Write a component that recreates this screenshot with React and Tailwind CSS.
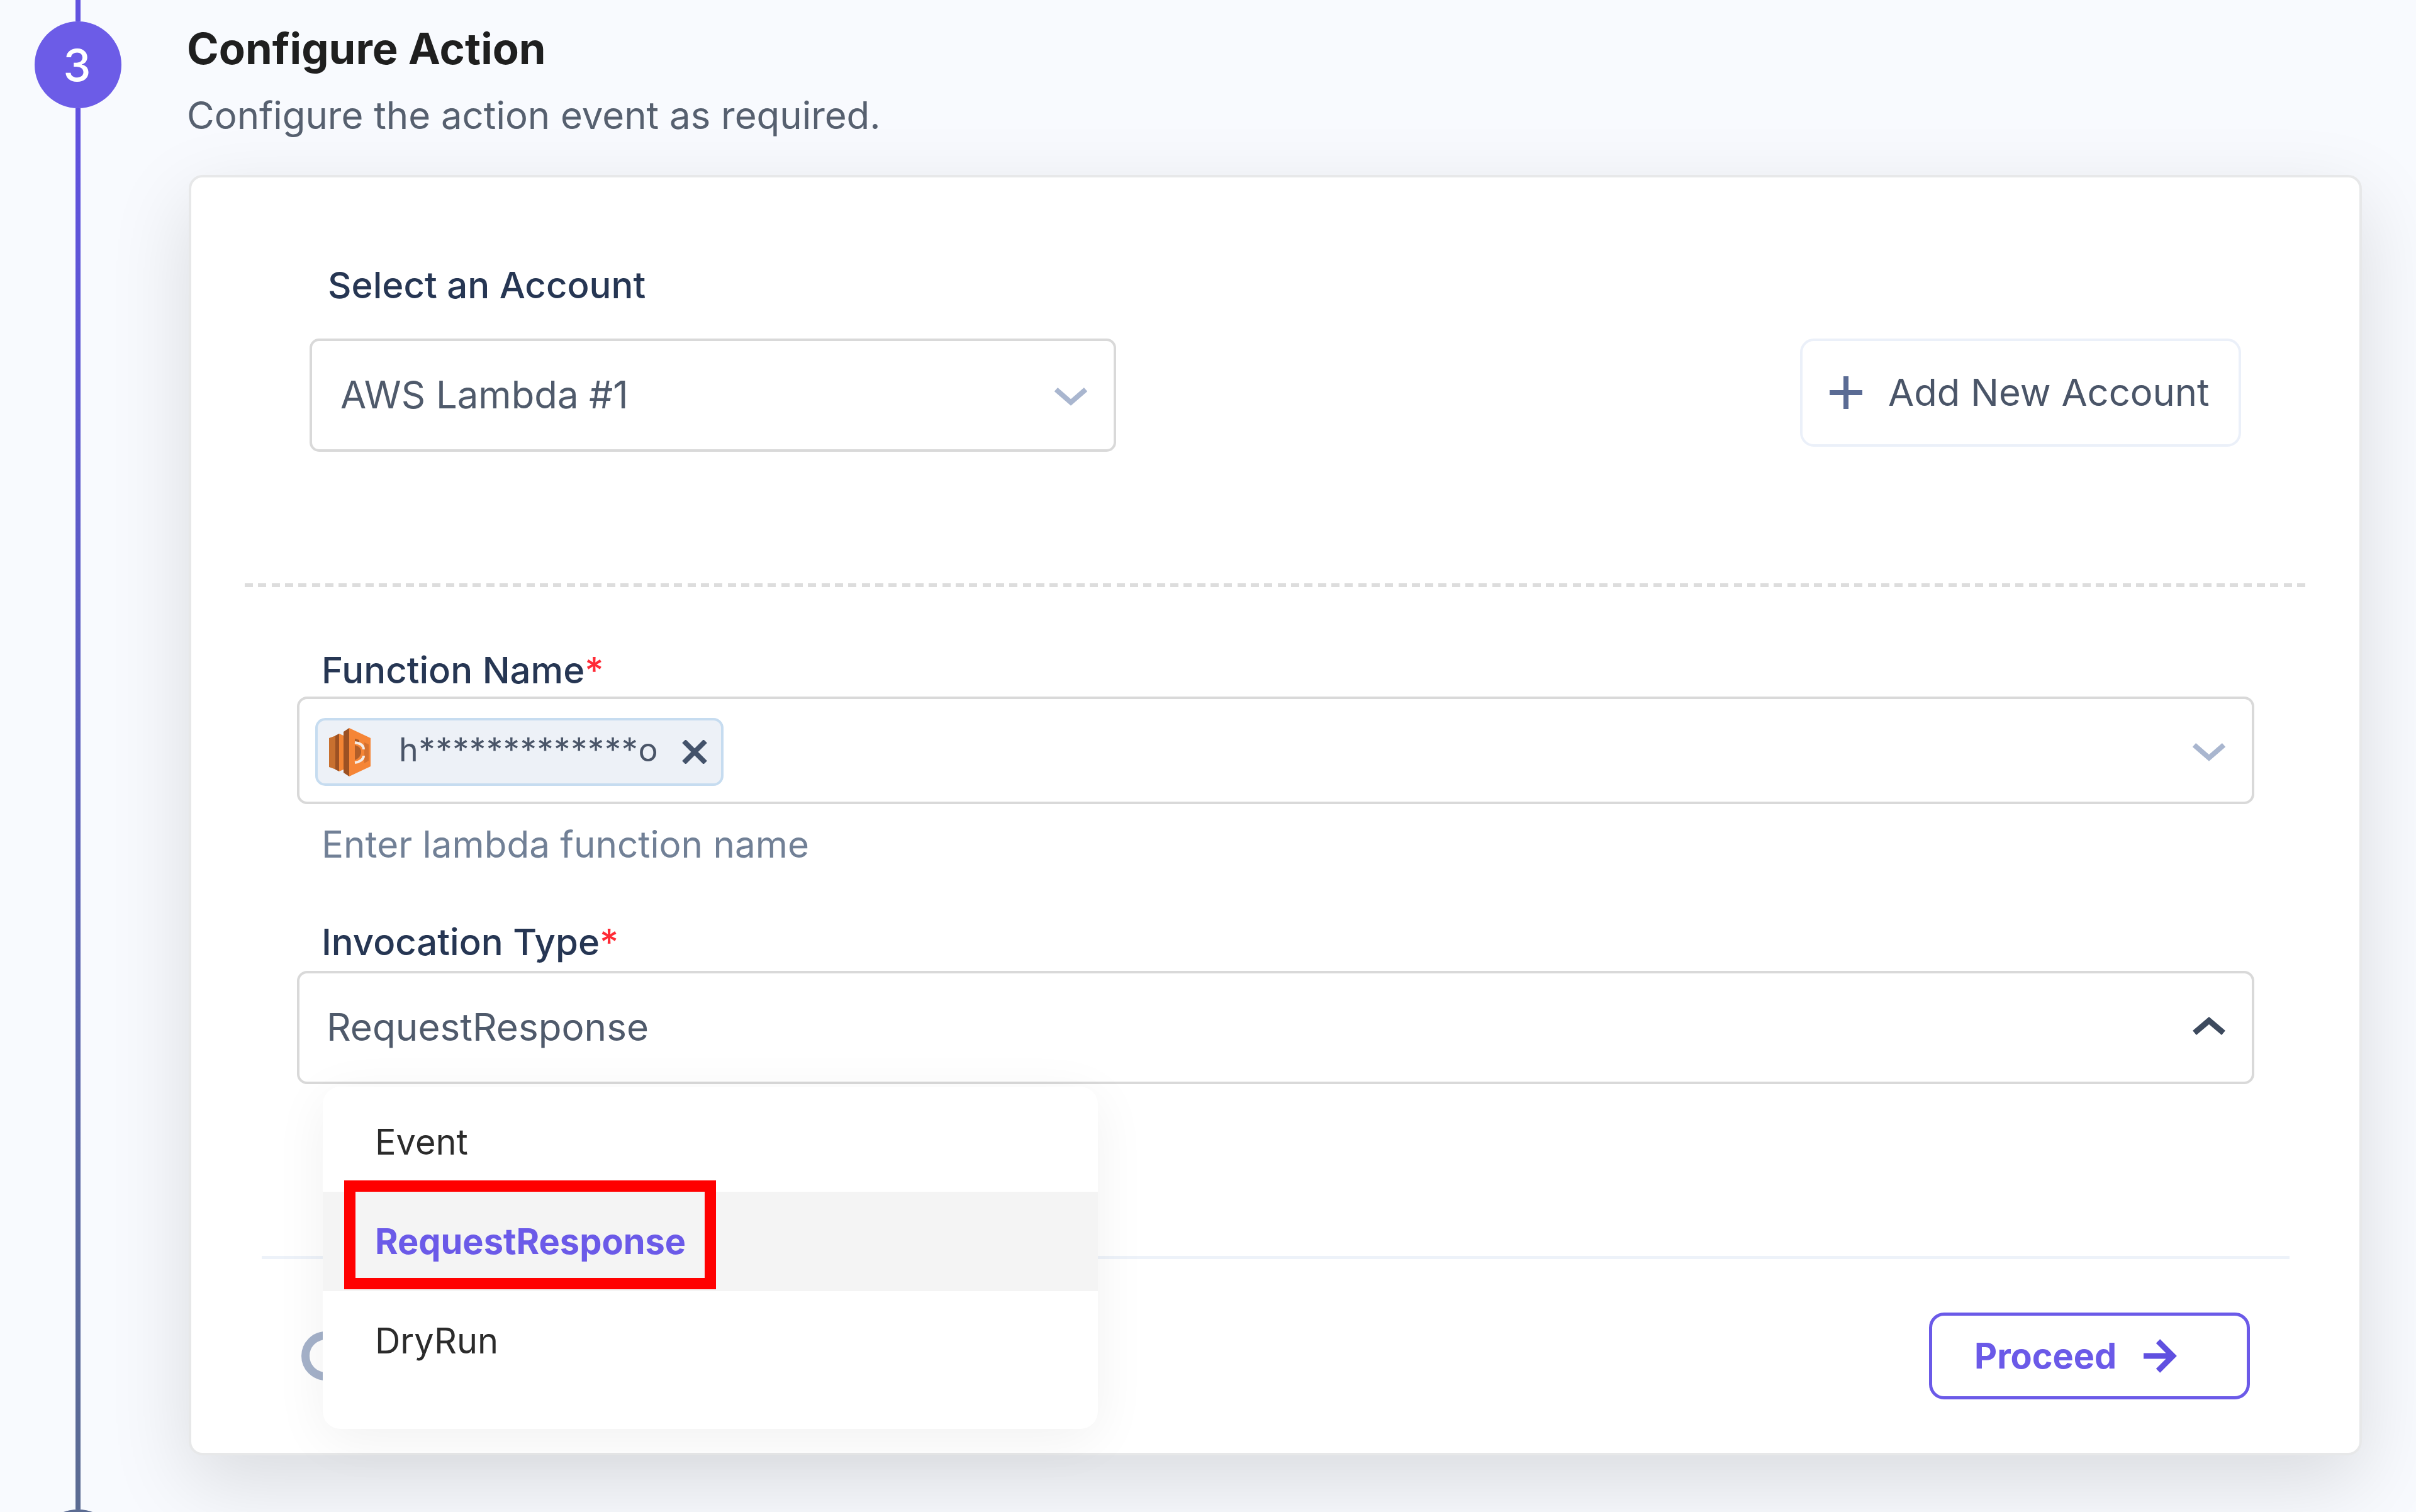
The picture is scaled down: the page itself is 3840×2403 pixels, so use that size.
import React, { useState } from "react";

const invocationTypes = ["Event", "RequestResponse", "DryRun"];

const App = () => {
  const [invocationType, setInvocationType] = useState("RequestResponse");

  return (
    <div className="flex w-[3840px] h-[2403px] overflow-hidden bg-[#f8fafe] font-['Inter',sans-serif] [font-optical-sizing:none]">
      <Stepper />

      <main className="w-[3457px] ml-[49px] pt-[35px] shrink-0">
        <h2 className="text-[68.7px] leading-[84px] font-bold text-[#1f1f1f]">
          Configure Action
        </h2>
        <p className="mt-[22px] text-[59.9px] leading-[84px] text-[#56606f]">
          Configure the action event as required.
        </p>

        <section className="ml-[3px] mt-[53px] h-[2035px] rounded-[22px] border-4 border-[#e7e8e9] bg-white shadow-[0_43px_128px_rgba(0,0,0,0.125)]">
          <div className="pt-[135px] pl-[188px] pr-[188px]">
            <Label className="pl-[29px]">Select an Account</Label>

            <div className="flex items-start justify-between mt-[49px]">
              <button className="flex items-center justify-between w-[1282px] h-[180px] pl-[45px] pr-[42px] rounded-[15px] border-4 border-[#d9d9d9] text-[59.8px] text-[#4f5a6b]">
                <span>AWS Lambda #1</span>
                <ChevronDown className="mt-[4px]" />
              </button>

              <button className="flex items-center gap-[41px] w-[701px] h-[172px] pl-[43px] rounded-[22px] border-4 border-[#ebf0f9] text-[59.7px] text-[#4a5568] whitespace-nowrap">
                <Plus />
                <span>Add New Account</span>
              </button>
            </div>
          </div>

          <div className="mt-[209px] mx-[85px] h-[6px] bg-[repeating-linear-gradient(to_right,#dddddd_0_13px,transparent_13px_21.32px)]"></div>

          <div className="mt-[96px] ml-[168px] mr-[167px]">
            <Label className="pl-[39px]" required>
              Function Name
            </Label>
            <div className="flex items-center justify-between mt-[6px] h-[171px] pl-[25px] pr-[42px] rounded-[16px] border-4 border-[#d9d9d9]">
              <FunctionTag name="h*************o" />
              <ChevronDown className="mt-1" />
            </div>
            <p className="mt-[28px] pl-[39px] text-[58.4px] leading-[72px] text-[#718096]">
              Enter lambda function name
            </p>
          </div>

          <div className="relative mt-[83px] ml-[168px] mr-[167px]">
            <Label className="pl-[39px]" required>
              Invocation Type
            </Label>
            <button className="flex items-center justify-between mt-[10px] w-full h-[180px] pl-[43px] pr-[42px] rounded-[16px] border-4 border-[#d9d9d9] text-[60.2px] text-[#4f5a6b]">
              <span>{invocationType}</span>
              <ChevronUp />
            </button>
            <Menu selected={invocationType} onSelect={setInvocationType} />
          </div>

          <div className="mt-[273px] ml-[112px] mr-[111px] h-[5px] bg-[#edf2f9]"></div>

          <div className="flex items-center justify-between mt-[85px] pl-[175px] pr-[174px]">
            <div className="size-[78px] rounded-full border-[13px] border-[#a5b2ca]"></div>
            <button className="flex items-center w-[510px] h-[138px] pl-[67px] rounded-[24px] border-[5px] border-[#6b5ae8] text-[55.8px] font-bold text-[#6b5ae8]">
              <span>Proceed</span>
              <ArrowRight />
            </button>
          </div>
        </section>
      </main>
    </div>
  );
};

const Stepper = () => {
  return (
    <aside className="flex flex-col items-center w-[248px] shrink-0">
      <div className="w-2 h-[34px] shrink-0 bg-[#6152df]"></div>
      <div className="flex items-center justify-center size-[138px] pr-[3px] shrink-0 rounded-full bg-[#6c5ce7] text-[70px] font-medium text-white">
        3
      </div>
      <div className="w-2 h-[2227px] shrink-0 bg-linear-to-b from-[#6050e0] to-[#5b6b92]"></div>
      <div className="size-[138px] shrink-0 rounded-full bg-[#5b6b92]"></div>
    </aside>
  );
};

const Label = ({ children, required, className }) => {
  return (
    <div
      className={`text-[58.1px] leading-[72px] font-medium text-[#263653] ${className}`}
    >
      {children}
      {required && <span className="text-[#ff2a35]">*</span>}
    </div>
  );
};

const FunctionTag = ({ name }) => {
  return (
    <div className="flex items-center h-[108px] mt-[5px] pl-[17px] pr-[22px] rounded-[16px] border-4 border-[#c6dcf0] bg-[#edf1f7]">
      <LambdaIcon />
      <span className="ml-[44px] pb-[6px] text-[52px] tracking-[0.8px] text-[#4a5568]">
        {name}
      </span>
      <svg
        className="ml-[37px] w-[40px] h-[38px]"
        viewBox="0 0 40 38"
        fill="none"
        stroke="#43526a"
        strokeWidth="8"
      >
        <path d="M3 2l34 34M37 2L3 36" />
      </svg>
    </div>
  );
};

const Menu = ({ selected, onSelect }) => {
  return (
    <ul className="absolute left-[41px] top-[266px] w-[1232px] h-[544px] pt-[9px] rounded-[28px] bg-white shadow-[0_17px_85px_rgba(0,0,0,0.06)]">
      {invocationTypes.map((type) =>
        type === selected ? (
          <li
            key={type}
            className="relative flex items-center h-[158px] pl-[83px] bg-[#f4f4f4] text-[55.9px] font-bold text-[#6b5ae8]"
          >
            {type}
            <span className="absolute left-[34px] top-[-18px] w-[591px] h-[173px] border-[18px] border-[#ff0000]"></span>
          </li>
        ) : (
          <li
            key={type}
            onClick={() => onSelect(type)}
            className="flex items-center h-[158px] pl-[83px] text-[55.9px] text-[#2b2b2b]"
          >
            {type}
          </li>
        )
      )}
    </ul>
  );
};

const ChevronDown = ({ className }) => (
  <svg
    className={`w-[52px] h-[32px] ${className}`}
    viewBox="0 0 52 32"
    fill="none"
    stroke="#a9b6cf"
    strokeWidth="8"
  >
    <path d="M2.5 5L26 25.5L49.5 5" />
  </svg>
);

const ChevronUp = () => (
  <svg
    className="w-[52px] h-[32px] mb-1"
    viewBox="0 0 52 32"
    fill="none"
    stroke="#3d4a5e"
    strokeWidth="9"
  >
    <path d="M3 26.5L26 7L49 26.5" />
  </svg>
);

const Plus = () => (
  <svg
    className="size-[52px]"
    viewBox="0 0 52 52"
    stroke="#5a6b94"
    strokeWidth="8"
  >
    <path d="M26 0v52M0 26h52" />
  </svg>
);

const ArrowRight = () => (
  <svg
    className="ml-[43px] w-[54px] h-[54px]"
    viewBox="0 0 54 54"
    fill="none"
    stroke="#6050e0"
    strokeWidth="9"
  >
    <path d="M0 27h48M23 3.5L46.5 27L23 50.5" />
  </svg>
);

const LambdaIcon = () => (
  <svg className="w-[68px] h-[77px]" viewBox="0 0 68 77">
    <path fill="#c8702f" d="M1 16l11-4v54L1 62z" />
    <path fill="#9c5123" d="M11 12l6-3v60l-6-3z" />
    <path fill="#f38534" d="M17 9l7 3v54l-7 3z" />
    <path fill="#9c5123" d="M24 6l9-6v77l-9-6z" />
    <path fill="#f58536" d="M33 0l34 16v45L33 77z" />
    <path fill="#a85a28" d="M42 17l7 2v5l-7-2z" />
    <path fill="#d57230" d="M57 23l7 3v26l-7 4z" />
    <path fill="#b05e29" d="M42 27c8 3 10 6 10 11s-3 10-10 13z" />
    <path
      fill="none"
      stroke="#f4ece6"
      strokeWidth="4"
      d="M42 23c8 1 14 4 14 11M56 44c0 6-6 10-14 11"
    />
  </svg>
);

export default App;
